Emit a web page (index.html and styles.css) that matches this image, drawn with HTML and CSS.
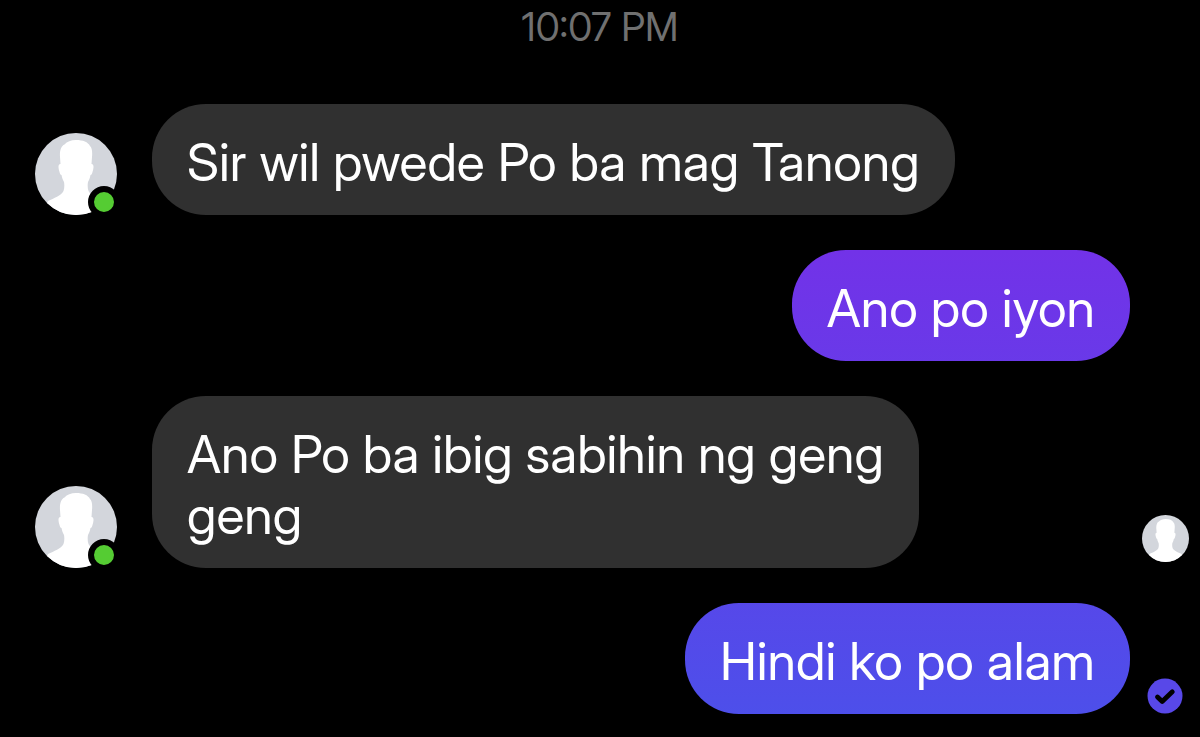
FILE: index.html
```html
<!DOCTYPE html>
<html lang="fil">
<head>
    <meta charset="UTF-8">
    <meta name="viewport" content="width=device-width, initial-scale=1.0">
    <title>Chat</title>
    <link rel="stylesheet" href="styles.css">
</head>
<body>
    <!-- Shared avatar silhouette -->
    <svg class="symbols" aria-hidden="true">
        <symbol id="person" viewBox="0 0 82 82">
            <clipPath id="round"><circle cx="41" cy="41" r="41"/></clipPath>
            <g clip-path="url(#round)">
                <rect width="82" height="82" fill="#d3d6dc"/>
                <path fill="#fff" d="M41 7C48 7 53 9 55 13C57 15 57.500 19 57 24L56.500 31C59 31 59 35 57.500 39C57 41 56.500 42 55.500 42C55 45 54 47 53 49C52.500 52 52.500 55 53.500 58C56 63 63 65 69 68L76 84H6L13 68C19 65 26 63 28.500 58C29.500 55 29.500 52 29 49C28 47 27 45 26.500 42C25.500 42 25 41 24.500 39C23 35 23 31 25.500 31L25 24C24.500 18 26 13 29.500 11.500C32 8.500 36 7 41 7Z"/>
            </g>
        </symbol>
    </svg>

    <main class="chat">
        <time class="chat-time">10:07 PM</time>

        <!-- Messages -->
        <div class="row">
            <div class="avatar">
                <svg class="avatar-img" role="img" aria-label="Contact"><use href="#person"/></svg>
                <span class="online"></span>
            </div>
            <p class="bubble received">Sir wil pwede Po ba mag Tanong</p>
        </div>

        <div class="row">
            <p class="bubble sent">Ano po iyon</p>
            <div class="receipt"></div>
        </div>

        <div class="row">
            <div class="avatar">
                <svg class="avatar-img" role="img" aria-label="Contact"><use href="#person"/></svg>
                <span class="online"></span>
            </div>
            <p class="bubble received">Ano Po ba ibig sabihin ng geng<br>geng</p>
            <div class="receipt">
                <svg class="seen" role="img" aria-label="Seen"><use href="#person"/></svg>
            </div>
        </div>

        <div class="row">
            <p class="bubble sent">Hindi ko po alam</p>
            <div class="receipt">
                <svg class="delivered" viewBox="0 0 36 36" role="img" aria-label="Delivered">
                    <circle cx="18" cy="18" r="17.500" fill="#5848e8"/>
                    <path d="M10.500 19L15.200 23.500L25.300 13.800" fill="none" stroke="#000" stroke-width="4.800" stroke-linecap="round" stroke-linejoin="round"/>
                </svg>
            </div>
        </div>
    </main>
</body>
</html>
```

FILE: styles.css
```css
* {
    margin: 0;
    padding: 0;
    box-sizing: border-box;
}

:root {
    --bg: #000000;
    --received: #303030;
    --online: #55cc33;
    --gap: 35px;
}

body {
    background-color: var(--bg);
    color: #ffffff;
    font-family: 'Inter Display', Inter, 'Liberation Sans', sans-serif;
}

.symbols {
    position: absolute;
    width: 0;
    height: 0;
}

.chat {
    display: flex;
    flex-direction: column;
    gap: var(--gap);
    padding: 5px 0 23px;
}

.chat-time {
    margin-bottom: 20px;
    color: #707070;
    font-size: 39px;
    line-height: 44px;
    text-align: center;
}

/* Message rows */
.row {
    display: flex;
    align-items: flex-end;
    padding-left: var(--gap);
}

.bubble {
    padding: 28px 35px 22px;
    border-radius: 54px;
    font-size: 52px;
    line-height: 61px;
}

.received {
    background-color: var(--received);
}

/* The gradient runs down the window, each bubble shows its part */
.sent {
    margin-left: auto;
    background: linear-gradient(#7232e8 34%, #4d4fea 97%) fixed;
}

/* Avatar */
.avatar {
    position: relative;
    flex: none;
    width: 82px;
    height: 82px;
    margin-right: var(--gap);
}

.avatar-img {
    display: block;
    width: 100%;
    height: 100%;
}

.online {
    position: absolute;
    right: -3px;
    bottom: -3px;
    width: 32px;
    height: 32px;
    border: 6px solid var(--bg);
    border-radius: 50%;
    background-color: var(--online);
}

/* Read receipts */
.receipt {
    display: flex;
    flex: none;
    justify-content: center;
    width: 70px;
    margin-left: auto;
}

.sent + .receipt {
    margin-left: 0;
}

.seen {
    width: 47px;
    height: 47px;
    margin-bottom: 6px;
}

.delivered {
    width: 36px;
    height: 36px;
}
```
